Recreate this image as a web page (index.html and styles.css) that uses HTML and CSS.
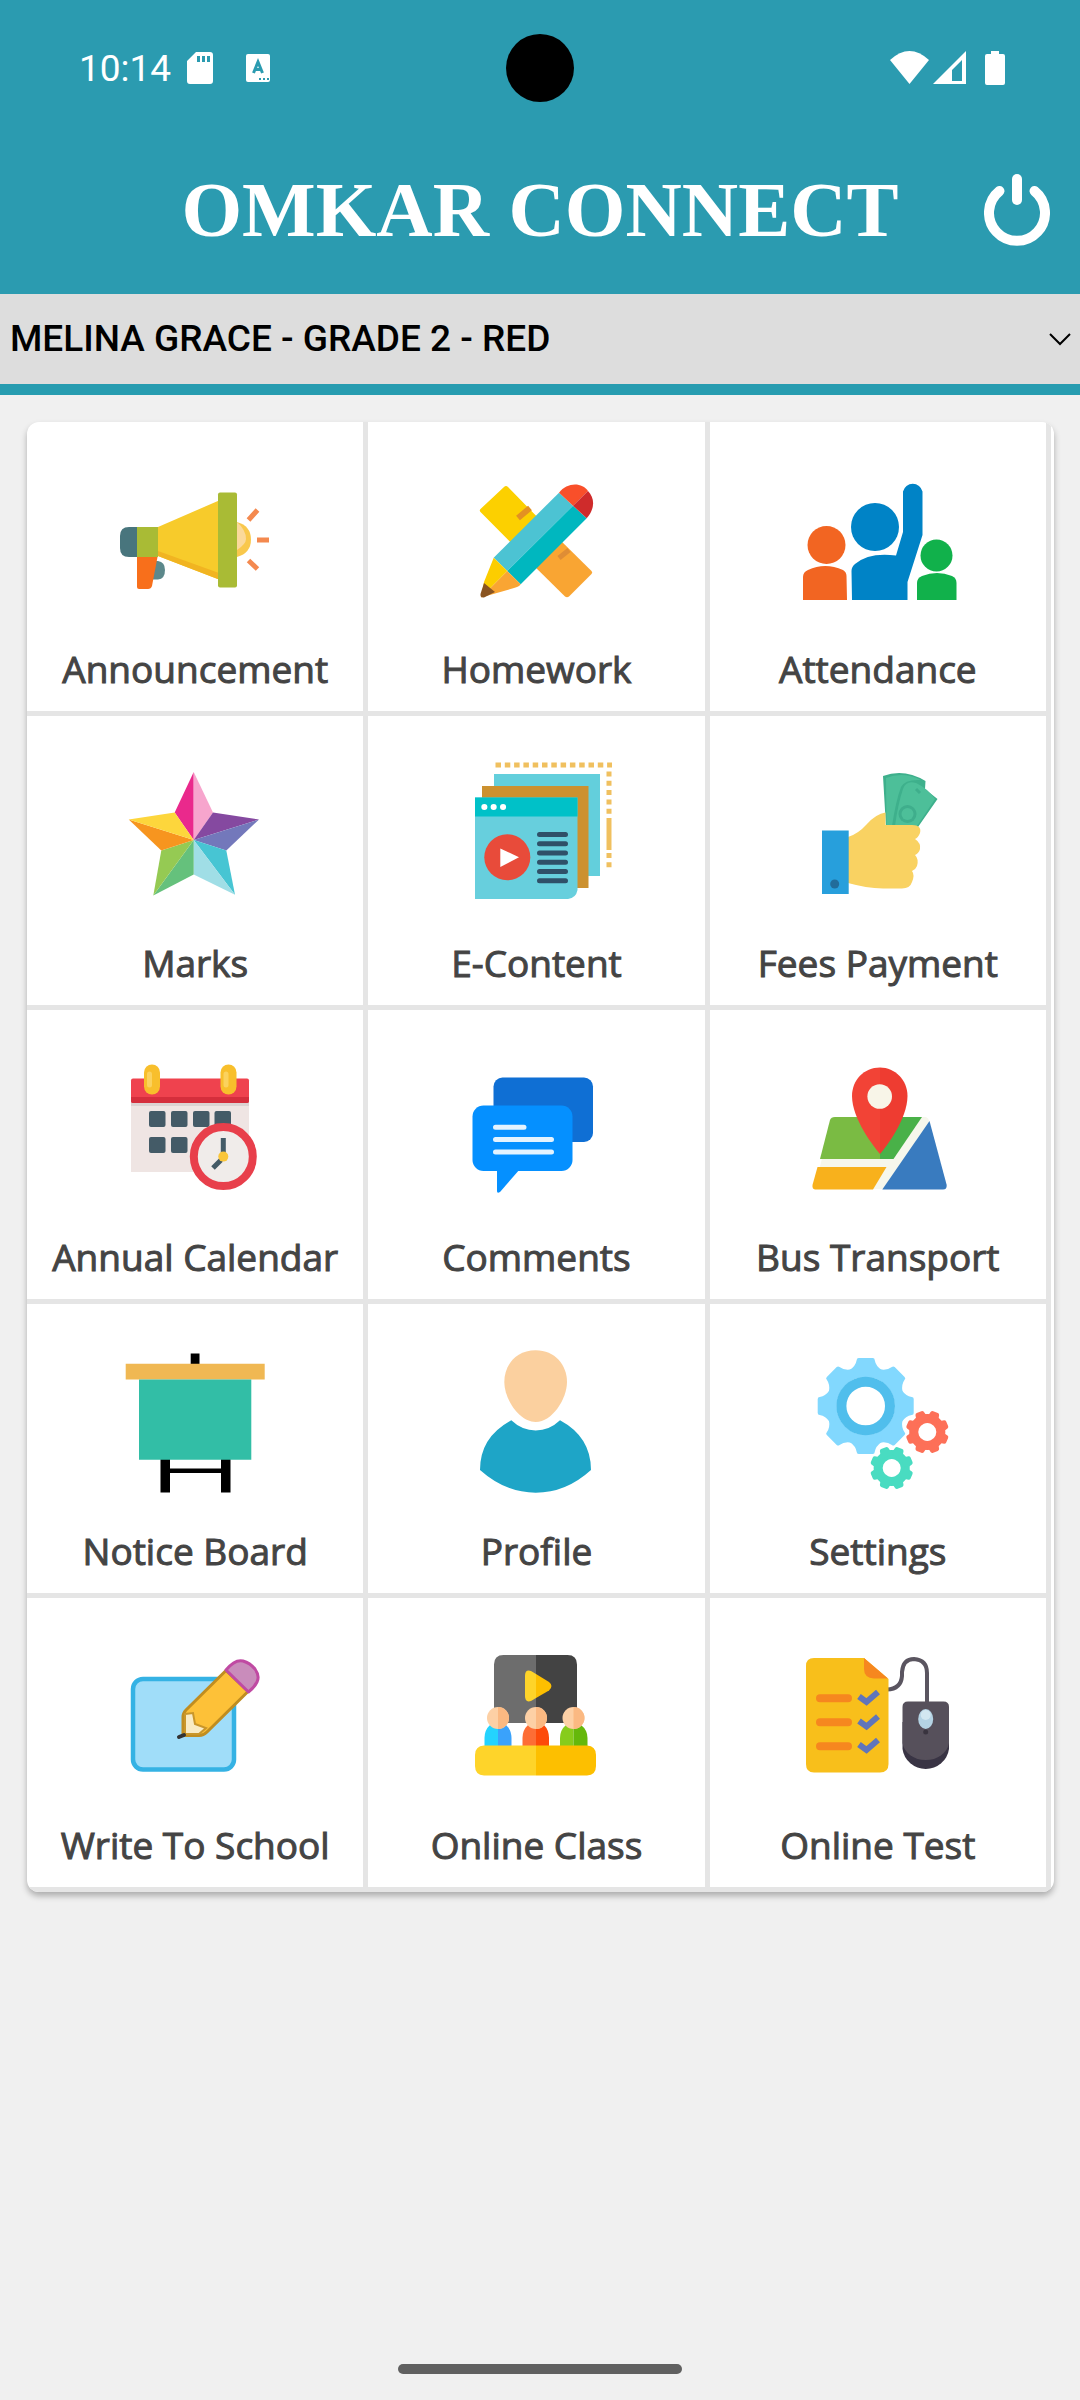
FILE: index.html
```html
<!DOCTYPE html>
<html lang="en">
<head>
    <meta charset="utf-8">
    <meta name="viewport" content="width=device-width, initial-scale=1">
    <title>Omkar Connect</title>
    <link rel="stylesheet" href="styles.css">
</head>
<body>
<header class="header">
    <div class="status">
        <div class="status-left">
            <span class="time">10:14</span>
            <svg class="sd" width="26" height="32" viewBox="0 0 26 32"><path fill="#fff" fill-rule="evenodd" d="M9 0H23Q26 0 26 3V29Q26 32 23 32H3Q0 32 0 29V9ZM10 4V10H13V4ZM15 4V10H18V4ZM20 4V10H23V4Z"/></svg>
            <svg width="24" height="28" viewBox="0 0 24 28"><rect width="24" height="28" rx="2" fill="#fff"/><path d="M7.500 19L12 8L16.500 19M9 15.500H15" fill="none" stroke="#2b9bb0" stroke-width="3"/><path d="M13 25H23" stroke="#2b9bb0" stroke-width="2" stroke-dasharray="2 2"/></svg>
        </div>
        <div class="camera"></div>
        <div class="status-right">
            <svg width="39" height="34" viewBox="0 0 39 34"><path fill="#fff" d="M0 9Q19.500-9 39 9L19.500 33Z"/></svg>
            <svg width="33" height="34" viewBox="0 0 33 34"><path fill="#fff" fill-rule="evenodd" d="M33 0V33H0ZM29 9L19 19V30H29Z"/></svg>
            <svg class="battery" width="20" height="34" viewBox="0 0 20 34"><path fill="#fff" d="M6 0H14V3H18Q20 3 20 5V32Q20 34 18 34H2Q0 34 0 32V5Q0 3 2 3H6Z"/></svg>
        </div>
    </div>
    <div class="titlebar">
        <h1>OMKAR CONNECT</h1>
        <button class="power" type="button" aria-label="Log out">
            <svg width="66" height="72" viewBox="0 0 66 72"><g fill="none" stroke="#fff" stroke-width="10" stroke-linecap="round"><path d="M33 5V26"/><path d="M15.500 17A28 28 0 1 0 50.500 17"/></g></svg>
        </button>
    </div>
</header>

<div class="student">
    <select aria-label="Student">
        <option>MELINA GRACE - GRADE 2 - RED</option>
    </select>
    <svg class="arrow" width="24" height="14" viewBox="0 0 24 14"><path d="M2 2L12 12L22 2" fill="none" stroke="#000" stroke-width="2"/></svg>
</div>

<main>
    <nav class="menu">
        <a href="#announcement">
            <svg viewBox="0 0 180 150">
                <path fill="#48757d" d="M33 61H24Q15 61 15 70V82Q15 91 24 91H33Z"/>
                <path fill="#5c888b" d="M48 95H53Q60 96 60 104Q60 113 53 113.500H46Z"/>
                <path fill="#a9bb35" d="M32 61H53V91H32Z"/>
                <path fill="#f7cb2b" d="M53 61L114 34.500V113.500L53 90Z"/>
                <path fill="#f1b421" d="M53 85L114 107V113.500L53 90Z"/>
                <path fill="#f9c84c" d="M132 56Q146 60 146 73.500Q146 87 132 91Z"/>
                <path fill="#fbd99a" d="M132 56Q141 64 141 73Q141 78 132 84Z"/>
                <rect x="113" y="26.500" width="19" height="95" rx="2" fill="#a9bb35"/>
                <path fill="#f86f1b" d="M32 91H52.500L47 120Q46 123 43 123H34Q32 123 32 121Z"/>
                <path d="M143.500 54L152.500 44M152 74H164M143.500 94.500L152.500 103" stroke="#f4894f" stroke-width="5"/>
            </svg>
            <span>Announcement</span>
        </a>
        <a href="#homework">
            <svg viewBox="0 0 180 150">
                <path fill="#fcd000" d="M58 21Q60 19 62 21L102 62L75 87L34.500 46Q33 44.500 34.500 43Z"/>
                <path fill="#f9a533" d="M80 92L106 66L145.500 105Q147 106.500 145.500 108L123 130.500Q121 132 119 130.500Z"/>
                <path d="M72 52L84 42" stroke="#e39122" stroke-width="6"/>
                <path d="M113 92L123 84" stroke="#df8d35" stroke-width="5"/>
                <path fill="#4cc3d3" d="M113 26.700L127 39.700L61.300 105L47.700 91.700Z"/>
                <path fill="#00b7bf" d="M127 39.700L140.700 52.300L74.700 118.300L61.300 105Z"/>
                <path fill="#f94f2a" d="M113 26.700C121 16 136 16 142 25L127 39.700Z"/>
                <path fill="#cf2b2b" d="M142 25C149 32 149 43 140.700 52.300L127 39.700Z"/>
                <path fill="#fccd00" d="M47.700 91.700L61.300 105L35 131.500L38 116Z"/>
                <path fill="#f9a533" d="M61.300 105L74.700 118.300Q73 121 68 122L35 131.500Z"/>
                <path fill="#8a5420" d="M38 117L49 126L38 131.500Q34 132 34.500 128Z"/>
            </svg>
            <span>Homework</span>
        </a>
        <a href="#attendance">
            <svg viewBox="0 0 180 150">
                <g fill="#f26522">
                    <circle cx="38.500" cy="79" r="19"/>
                    <path d="M15 134V111Q15 106 20 104Q37 96 55 104Q58.500 106 58.500 110L59 134Z"/>
                </g>
                <g fill="#0083c6">
                    <circle cx="87" cy="61" r="24"/>
                    <path d="M64 134L63.500 105Q63.500 101 67 98Q81 86 108 89.500L115 66V25.500A10 10 0 0 1 134.500 25.500V69L119.500 116V134Z"/>
                </g>
                <g fill="#11b14b">
                    <circle cx="148.500" cy="89.500" r="16"/>
                    <path d="M129 134V117Q129 112 134 110Q149 104 164 110Q168.500 112 168.500 117V134Z"/>
                </g>
            </svg>
            <span>Attendance</span>
        </a>
        <a href="#marks">
            <svg viewBox="0 0 180 150">
                <path fill="#ea298c" d="M88.700 12V80L69.700 52.600Z"/>
                <path fill="#f7a5cd" d="M88.700 12V80L108 52.600Z"/>
                <path fill="#8549a0" d="M154 59.500L88.700 80L108 52.600Z"/>
                <path fill="#7378bb" d="M154 59.500L88.700 80L121.300 90.500Z"/>
                <path fill="#47c5d3" d="M130 134.800L88.700 80L121.300 90.500Z"/>
                <path fill="#a0dee6" d="M130 134.800L88.700 80V114.600Z"/>
                <path fill="#65c17c" d="M48.300 135.600L88.700 80V114.600Z"/>
                <path fill="#95ca53" d="M48.300 135.600L88.700 80L56.300 90.500Z"/>
                <path fill="#f7951f" d="M23.700 59.500L88.700 80L56.300 90.500Z"/>
                <path fill="#fdd63c" d="M23.700 59.500L88.700 80L69.700 52.600Z"/>
            </svg>
            <span>Marks</span>
        </a>
        <a href="#econtent">
            <svg viewBox="0 0 180 150">
                <path d="M49.500 5H166" stroke="#f0c05f" stroke-width="5" stroke-dasharray="5.500 3.800"/>
                <path d="M163 11.500V58M163 93V109" stroke="#f0c05f" stroke-width="5" stroke-dasharray="5 4.300"/>
                <path d="M163 58V90" stroke="#f0c05f" stroke-width="5"/>
                <path fill="#63cfdc" d="M48 14H154V116H48Z"/>
                <path fill="#cc912f" d="M36 26H142.500V128H36Z"/>
                <path fill="#67cfdd" d="M29 37.500H131.500V130Q130 138 122 139H29Z"/>
                <path fill="#00c1c8" d="M29 37.500H131.500V56.500H29Z"/>
                <path d="M38.300 47H38.400M47.600 47H47.700M57 47H57.100" stroke="#fff" stroke-width="6" stroke-linecap="round"/>
                <circle cx="61.300" cy="97.300" r="23" fill="#e84b3a"/>
                <path fill="#fff" d="M54.300 88.500L73 97.300L54.300 107Z"/>
                <path d="M93.500 74.500H119.500M93.500 83.700H119.500M93.500 93H119.500M93.500 102.200H119.500M93.500 111.500H119.500M93.500 120.700H119.500" stroke="#2f5068" stroke-width="5" stroke-linecap="round"/>
            </svg>
            <span>E-Content</span>
        </a>
        <a href="#fees">
            <svg viewBox="0 0 180 150">
                <path fill="#3eb08c" d="M95 16Q116 8 137.500 21L137 29L149.500 39L130 67H98Z"/>
                <path fill="#4dbf99" d="M98 18Q115 11 133 20Q117 19 113 27Q108 40 104 66H98.500Z"/>
                <path fill="#4dbf99" d="M107 66Q110 44 115 29Q118 20 128 23Q139 28 147 39L129 66Z"/>
                <circle cx="119.500" cy="54" r="9" fill="#3fae8c"/>
                <circle cx="119.500" cy="54" r="6" fill="#4dbf99"/>
                <path d="M128 29L132 33" stroke="#3fae8c" stroke-width="3"/>
                <path fill="#f9d262" d="M60 77Q70 74 79 64T97.500 52.500V65H124Q134 65 132 73Q130 78 127 79Q133 83 132 89Q131 93 127 95Q131 99 129 106Q128 109 124 111Q127 115 124 122Q122 128.500 114 128.500H95Q78 128 60 123Z"/>
                <path fill="#279fdc" d="M34 70.500H60.700V134H34Z"/>
                <circle cx="46.700" cy="124" r="4.500" fill="#226c9a"/>
            </svg>
            <span>Fees Payment</span>
        </a>
        <a href="#calendar">
            <svg viewBox="0 0 180 150">
                <path fill="#efe5e3" d="M26 45H144V118H26Z"/>
                <path fill="#dcd3d2" d="M26 48H144V52H26Z"/>
                <rect x="26" y="24.500" width="118" height="24.500" rx="2" fill="#ef424e"/>
                <path fill="#d52e3c" d="M26 43H144V47Q144 49 142 49H28Q26 49 26 47Z"/>
                <g fill="#f8bf2c">
                    <rect x="39" y="10.500" width="16" height="30" rx="8"/>
                    <rect x="115.500" y="10.500" width="16" height="30" rx="8"/>
                </g>
                <path d="M44.500 20V31M121 20V31" stroke="#fbd25e" stroke-width="5" stroke-linecap="round"/>
                <g fill="#445b67">
                    <rect x="44" y="57" width="16.500" height="16" rx="2"/>
                    <rect x="66" y="57" width="16.500" height="16" rx="2"/>
                    <rect x="88" y="57" width="16.500" height="16" rx="2"/>
                    <rect x="109.500" y="57" width="16.500" height="16" rx="2"/>
                    <rect x="44" y="83" width="16.500" height="16" rx="2"/>
                    <rect x="66" y="83" width="16.500" height="16" rx="2"/>
                </g>
                <circle cx="118.300" cy="102.600" r="29.500" fill="#f0ecea" stroke="#e83f4b" stroke-width="8"/>
                <path d="M118.300 84V100M116 106L108 114" stroke="#445b67" stroke-width="5"/>
                <circle cx="118.300" cy="102.600" r="5" fill="#fac63a"/>
            </svg>
            <span>Annual Calendar</span>
        </a>
        <a href="#comments">
            <svg viewBox="0 0 180 150">
                <rect x="47.500" y="23.500" width="99.500" height="64.500" rx="9" fill="#0f6fd4"/>
                <rect x="26.500" y="51.500" width="100" height="65.500" rx="11" fill="#0590ff"/>
                <path fill="#0590ff" d="M51 115H74L54 138Q51 140 51 137Z"/>
                <path d="M49.500 73.300H78M49.500 85.600H105.500M49.500 98H105.500" stroke="#e4f3ff" stroke-width="5" stroke-linecap="round"/>
            </svg>
            <span>Comments</span>
        </a>
        <a href="#transport">
            <svg viewBox="0 0 180 150">
                <path fill="#f6f7ec" d="M45 63H137Q140 63 141 67L157 135H26Z"/>
                <path fill="#7abb43" d="M47 63H92V105H32L42 66Q43 63 47 63Z"/>
                <path fill="#49b148" d="M92 63H134L105.500 105H92Z"/>
                <path fill="#f8b11c" d="M29.500 113H98.500L85 135.500H27Q24 135 24.500 131Z"/>
                <path fill="#397bbf" d="M141.500 67L158.700 131Q159 135.500 155 135.500H94.300Z"/>
                <path fill="#f24336" d="M92 100C86 93 64 65 64 42C64 26 76 13.500 92 13.500V100Z"/>
                <path fill="#ee3c31" d="M92 100C98 93 119.500 65 119.500 42C119.500 26 107 13.500 92 13.500V100Z"/>
                <circle cx="91.700" cy="42.500" r="12.300" fill="#f8f5e8"/>
            </svg>
            <span>Bus Transport</span>
        </a>
        <a href="#notice">
            <svg viewBox="0 0 180 150">
                <path d="M85.700 5.500H94.500V16H85.700ZM55.500 111H65V144.500H55.500ZM116 111H125.500V144.500H116ZM62 120.500H118V125H62Z"/>
                <path fill="#f0b853" d="M20.700 15.700H159.700V31.500H20.700Z"/>
                <path fill="#32bea6" d="M34 31.500H146.300V111.700H34Z"/>
            </svg>
            <span>Notice Board</span>
        </a>
        <a href="#profile">
            <svg viewBox="0 0 180 150">
                <path fill="#fbd09f" d="M89.700 2.200C109 2.200 121 17 121 34C121 51 106 74 89.700 74C73 74 58.300 51 58.300 34C58.300 17 70 2.200 89.700 2.200Z"/>
                <path fill="#1ea5c7" d="M65.300 72.300Q76 82.500 89.700 82.500T114 72.300Q145 89 145 122Q120 144.700 89.700 144.700T34 122Q34 89 65.300 72.300Z"/>
            </svg>
            <span>Profile</span>
        </a>
        <a href="#settings">
            <svg viewBox="0 0 180 150">
                <defs>
                    <path id="tooth" d="M-16-36Q-10-40-9-46Q-9-48-7-48H7Q9-48 9-46Q10-40 16-36V-30H-16Z"/>
                    <path id="cog" d="M-7-15Q-4.500-17-4.500-20Q-4-21.500-2.500-21.500H2.500Q4-21.500 4.500-20Q4.500-17 7-15V-12H-7Z"/>
                </defs>
                <g transform="translate(77.700 58)" fill="#82d8fe">
                    <circle r="34" fill="none" stroke="#82d8fe" stroke-width="10"/>
                    <use href="#tooth"/>
                    <use href="#tooth" transform="rotate(45)"/>
                    <use href="#tooth" transform="rotate(90)"/>
                    <use href="#tooth" transform="rotate(135)"/>
                    <use href="#tooth" transform="rotate(180)"/>
                    <use href="#tooth" transform="rotate(225)"/>
                    <use href="#tooth" transform="rotate(270)"/>
                    <use href="#tooth" transform="rotate(315)"/>
                    <circle r="24.300" fill="#fff" stroke="#50beec" stroke-width="10"/>
                </g>
                <g transform="translate(139.300 84) rotate(22.500)" fill="#fd7058">
                    <circle r="13.500" fill="none" stroke="#fd7058" stroke-width="9"/>
                    <use href="#cog"/>
                    <use href="#cog" transform="rotate(45)"/>
                    <use href="#cog" transform="rotate(90)"/>
                    <use href="#cog" transform="rotate(135)"/>
                    <use href="#cog" transform="rotate(180)"/>
                    <use href="#cog" transform="rotate(225)"/>
                    <use href="#cog" transform="rotate(270)"/>
                    <use href="#cog" transform="rotate(315)"/>
                </g>
                <g transform="translate(103.700 120) rotate(22.500)" fill="#49dcc1">
                    <circle r="13.500" fill="none" stroke="#49dcc1" stroke-width="9"/>
                    <use href="#cog"/>
                    <use href="#cog" transform="rotate(45)"/>
                    <use href="#cog" transform="rotate(90)"/>
                    <use href="#cog" transform="rotate(135)"/>
                    <use href="#cog" transform="rotate(180)"/>
                    <use href="#cog" transform="rotate(225)"/>
                    <use href="#cog" transform="rotate(270)"/>
                    <use href="#cog" transform="rotate(315)"/>
                </g>
            </svg>
            <span>Settings</span>
        </a>
        <a href="#write">
            <svg viewBox="0 0 180 150">
                <rect x="28" y="37" width="101" height="90.500" rx="10" fill="#a0ddf9" stroke="#35b2e4" stroke-width="4.500"/>
                <path fill="#fdc138" stroke="#c08d20" stroke-width="3" stroke-linejoin="round" d="M121 28.500L143 49.500L102 90Q98 94 93 93.500H78V75Q78 71 81 68Z"/>
                <path fill="#f9ebc4" stroke="#c9962a" stroke-width="2" d="M80 72L88 71L90 82L101 86L94 92H80Z"/>
                <path fill="#c98cbb" stroke="#c04aa3" stroke-width="3" stroke-linejoin="round" d="M121 28Q130 17 138 19Q145 21 150 27Q155 34 152 40Q149 46 143.500 50Z"/>
                <path d="M74 95L79 93" stroke="#333" stroke-width="4" stroke-linecap="round"/>
            </svg>
            <span>Write To School</span>
        </a>
        <a href="#class">
            <svg viewBox="0 0 180 150">
                <path fill="#6d6d6d" d="M90 13H57.500Q48 13 48 22.500V81H90Z"/>
                <path fill="#434343" d="M90 13H121.500Q131 13 131 22.500V81H90Z"/>
                <path fill="#fed42a" d="M90 32L85 29Q79 27 79 34V54Q79 61 85 59L90 56Z"/>
                <path fill="#fdbf00" d="M90 32L103 40Q108 44 103 48.500L90 56Z"/>
                <path fill="#24d3fe" d="M52 83H44Q38.500 88 38.500 96V105H52Z"/>
                <path fill="#3aa2fb" d="M52 83H60Q65.500 88 65.500 96V105H52Z"/>
                <path fill="#fd6d35" d="M90 83H82Q76.500 88 76.500 96V105H90Z"/>
                <path fill="#fd4a0a" d="M90 83H98Q103 88 103 96V105H90Z"/>
                <path fill="#87cc1c" d="M127.500 83H120Q114 88 114 96V105H127.500Z"/>
                <path fill="#65b80b" d="M127.500 83H135Q141.500 88 141.500 96V105H127.500Z"/>
                <g fill="#fdd0a5"><circle cx="52" cy="76" r="11"/><circle cx="90" cy="76" r="11"/><circle cx="127.500" cy="76" r="11"/></g>
                <path fill="#fbb982" d="M52 65A11 11 0 0 1 52 87ZM90 65A11 11 0 0 1 90 87ZM127.500 65A11 11 0 0 1 127.500 87Z"/>
                <path fill="#fed42a" d="M90 103.500H38Q29 104 29 113V124Q29 133 38 133.500H90Z"/>
                <path fill="#fdbf00" d="M90 103.500H141Q150 104 150 113V124Q150 133 141 133.500H90Z"/>
            </svg>
            <span>Online Class</span>
        </a>
        <a href="#test">
            <svg viewBox="0 0 180 150">
                <path d="M99 47.500Q113 47 114 34V30Q115 17 126 17Q139 18 139 31V66" fill="none" stroke="#5a5560" stroke-width="4"/>
                <path fill="#f8bf1b" d="M26 16H76L100.500 37V122Q100.500 130.500 92 130.500H26Q18 130.500 18 122V24Q18 16 26 16Z"/>
                <path fill="#f6871f" d="M76 16L100 36.500H86Q76 36 76 27Z"/>
                <path d="M32 56.300H60M32 80.300H60M32 104.300H60" stroke="#f6871f" stroke-width="8" stroke-linecap="round"/>
                <path d="M71 54.500L78.500 60L90 50M71 79L78.500 84.500L90 74.500M71 102.500L78.500 108L90 98" fill="none" stroke="#6075ba" stroke-width="6"/>
                <path fill="#393444" d="M114.500 80H161V107A23.500 23.500 0 0 1 114.500 107Z"/>
                <path fill="#56505b" d="M120 59.500H155.500Q161 59.500 161 65V101A23.500 20 0 0 1 114.500 101V65Q114.500 59.500 120 59.500Z"/>
                <ellipse cx="137.700" cy="77" rx="7.500" ry="10" fill="#b4d3e4"/>
                <ellipse cx="137.700" cy="73" rx="5" ry="5" fill="#d2e7f1"/>
                <circle cx="137.700" cy="90" r="2.500" fill="#39343f"/>
            </svg>
            <span>Online Test</span>
        </a>
    </nav>
</main>

<div class="home-bar"></div>
</body>
</html>
```
FILE: styles.css
```css
* {
    box-sizing: border-box;
}
body {
    margin: 0;
    min-height: 100vh;
    display: flex;
    flex-direction: column;
    background-color: #f0f0f0;
    font-family: "Open Sans", sans-serif;
}
svg {
    display: block;
}

.header {
    background-color: #2b9bb0;
    color: #fff;
}
.status {
    display: grid;
    grid-template-columns: 1fr auto 1fr;
    align-items: center;
    padding: 34px 75px 0;
}
.status-left,
.status-right {
    display: flex;
    align-items: center;
}
.status-left {
    padding-left: 4px;
}
.status-right {
    justify-content: flex-end;
    gap: 4px;
}
.time {
    font-family: Roboto, sans-serif;
    font-size: 37px;
}
.sd {
    margin: 0 33px 0 16px;
}
.battery {
    margin-left: 15px;
}
.camera {
    width: 68px;
    height: 68px;
    border-radius: 50%;
    background-color: #000;
}
.titlebar {
    display: grid;
    grid-template-columns: 1fr auto 1fr;
    align-items: center;
    height: 192px;
    padding: 24px 30px 0;
}
.titlebar h1 {
    grid-column: 2;
    margin: 0;
    font: bold 78px/90px "Liberation Serif", serif;
}
.power {
    justify-self: end;
    padding: 0;
    border: none;
    background: none;
    cursor: pointer;
}

.student {
    display: grid;
    align-items: center;
    border-bottom: 11px solid #279cb0;
    background-color: #ddd;
}
.student select,
.arrow {
    grid-area: 1 / 1;
}
.student select {
    width: 100%;
    height: 90px;
    padding: 0 40px 2px 10px;
    border: none;
    appearance: none;
    background: none;
    color: #000;
    font: 500 37px Roboto, sans-serif;
}
.arrow {
    justify-self: end;
    margin-right: 8px;
    pointer-events: none;
}

main {
    flex: 1;
    padding: 27px 26px 27px 27px;
}
.menu {
    display: grid;
    grid-template-columns: repeat(3, 1fr);
    padding-right: 3px;
    border-radius: 12px;
    background-color: #fff;
    box-shadow: 0 4px 6px rgba(0, 0, 0, 0.28);
    overflow: hidden;
}
.menu a {
    display: flex;
    flex-direction: column;
    align-items: center;
    height: 294px;
    padding-top: 44px;
    border-right: 5px solid #e5e5e5;
    border-bottom: 5px solid #e5e5e5;
    color: #444;
    text-decoration: none;
}
.menu svg {
    width: 180px;
    height: 150px;
}
.menu span {
    margin-top: 27px;
    font-size: 37px;
    line-height: 52px;
    -webkit-text-stroke: 1px #444;
}

.home-bar {
    width: 284px;
    height: 10px;
    margin: 0 auto 26px;
    border-radius: 5px;
    background-color: #606060;
}
```
